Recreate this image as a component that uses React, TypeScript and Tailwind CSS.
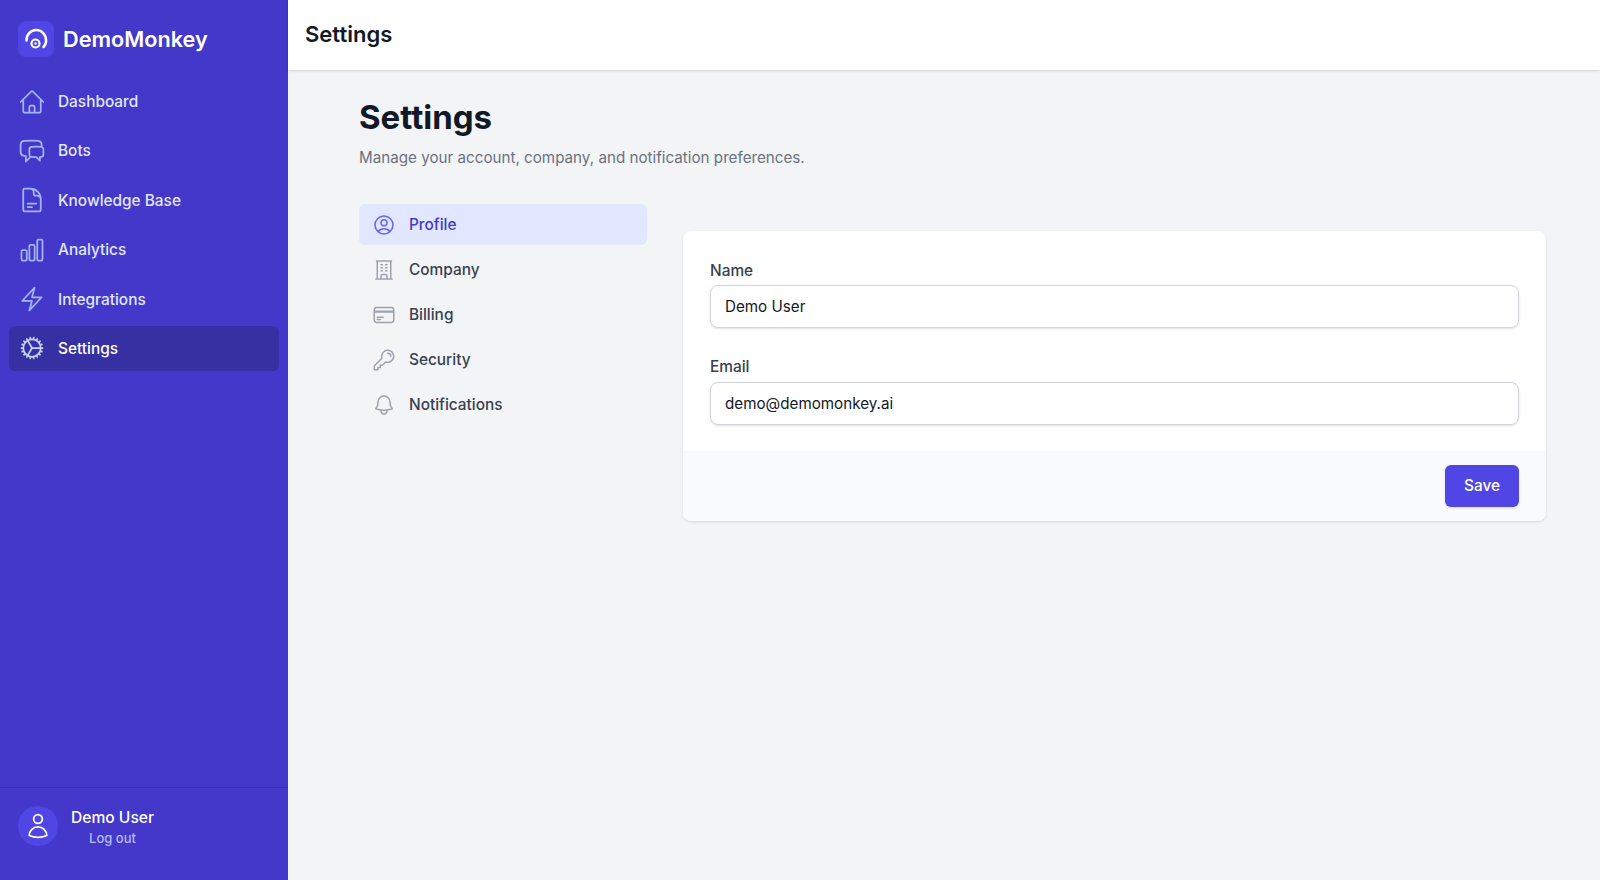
import React from "react";
import {
  HiOutlineHome,
  HiOutlineChatBubbleLeftRight,
  HiOutlineDocumentText,
  HiOutlineChartBar,
  HiOutlineBolt,
  HiOutlineCog,
  HiOutlineUserCircle,
  HiOutlineBuildingOffice,
  HiOutlineCreditCard,
  HiOutlineKey,
  HiOutlineBell,
  HiOutlineUser,
} from "react-icons/hi2";

const nav = [
  { label: "Dashboard", Icon: HiOutlineHome },
  { label: "Bots", Icon: HiOutlineChatBubbleLeftRight },
  { label: "Knowledge Base", Icon: HiOutlineDocumentText },
  { label: "Analytics", Icon: HiOutlineChartBar },
  { label: "Integrations", Icon: HiOutlineBolt },
  { label: "Settings", Icon: HiOutlineCog, active: true },
];
const tabs = [
  { label: "Profile", Icon: HiOutlineUserCircle, active: true },
  { label: "Company", Icon: HiOutlineBuildingOffice },
  { label: "Billing", Icon: HiOutlineCreditCard },
  { label: "Security", Icon: HiOutlineKey },
  { label: "Notifications", Icon: HiOutlineBell },
];

export default function App() {
  return (
    <div className="flex h-[880px] w-[1600px] overflow-hidden bg-[#f3f4f6] font-['Inter',sans-serif]">
      <aside className="flex w-[288px] shrink-0 flex-col bg-[#4338ca]">
        <div className="flex h-[78px] items-center gap-[9px] px-[18px]">
          <div className="flex h-9 w-9 items-center justify-center rounded-lg bg-[#4f46e5]">
            <svg width="36" height="36" viewBox="0 0 36 36" fill="none" stroke="white" strokeWidth="2.5" strokeLinecap="round">
              <path d="M8.5 19.5A9.5 10 0 0 1 28 19C28.5 22 27.5 24 25.5 26" />
              <circle cx="17.5" cy="22.5" r="4" strokeWidth="2.2" />
              <circle cx="17.5" cy="22.5" r="1.2" fill="white" stroke="none" />
            </svg>
          </div>
          <span className="text-[21.7px] font-semibold text-white">DemoMonkey</span>
        </div>
        <nav className="flex-1 px-[9px] pt-[1px]">
          {nav.map(({ label, Icon, active }) => (
            <div key={label} className={`mb-[4.4px] flex h-[45px] items-center gap-[12px] rounded-md px-[9px] text-[15.4px] font-medium ${active ? "bg-[#3730a3] text-white" : "text-[#e0e7ff]"}`}>
              <Icon className={`h-7 w-7 ${active ? "text-[#c7d2fe]" : "text-[#a5b4fc]"}`} />
              {label}
            </div>
          ))}
        </nav>
        <div className="flex h-[93px] items-start gap-[13px] border-t border-[#3730a3] px-[18px] pt-[18px]">
          <div className="flex h-10 w-10 items-center justify-center rounded-full bg-[#4f46e5]">
            <HiOutlineUser className="h-7 w-7 text-white" />
          </div>
          <div className="mt-[2px] text-center">
            <div className="text-[15.6px] font-medium leading-[20px] text-white">Demo User</div>
            <div className="text-[13px] font-medium leading-[20px] text-[#b5bdfb]">Log out</div>
          </div>
        </div>
      </aside>
      <div className="flex min-w-0 flex-1 flex-col">
        <header className="flex h-[70px] items-center bg-white px-[17px] pb-[2px] shadow-sm">
          <h1 className="text-[22px] font-semibold text-[#111827]">Settings</h1>
        </header>
        <main className="pl-[71px] pr-[54px] pt-[27px]">
          <h2 className="text-[33px] font-bold leading-[40px] text-[#111827]">Settings</h2>
          <p className="mt-[9px] text-[15.2px] leading-6 text-[#6b7280]">Manage your account, company, and notification preferences.</p>
          <div className="mt-[34px] flex items-start gap-[36px]">
            <div className="w-[288px] shrink-0">
              {tabs.map(({ label, Icon, active }) => (
                <div key={label} className={`mb-[4px] flex h-[41px] items-center gap-[13px] rounded-md px-[13px] text-[15.4px] font-medium ${active ? "bg-[#e0e7ff] text-[#4338ca]" : "text-[#374151]"}`}>
                  <Icon className={`h-6 w-6 ${active ? "text-[#6366f1]" : "text-[#9ca3af]"}`} />
                  {label}
                </div>
              ))}
            </div>
            <div className="mt-[27px] flex-1 overflow-hidden rounded-lg bg-white shadow">
              <div className="px-[27px] pb-[26px] pt-[28px]">
                <label className="block text-[15.4px] font-medium leading-6 text-[#374151]">Name</label>
                <input readOnly value="Demo User" className="mt-[2px] block h-[43px] w-full rounded-lg border border-[#d1d5db] px-[14px] text-[15.2px] text-[#111827] shadow-sm" />
                <label className="mt-[27px] block text-[15.4px] font-medium leading-6 text-[#374151]">Email</label>
                <input readOnly value="demo@demomonkey.ai" className="mt-[3px] block h-[43px] w-full rounded-lg border border-[#d1d5db] px-[14px] text-[15.2px] text-[#111827] shadow-sm" />
              </div>
              <div className="flex justify-end bg-[#f9fafb] px-[27px] py-[14px]">
                <button className="h-[42px] rounded-md bg-[#4f46e5] px-[19px] text-[15.4px] font-medium text-white shadow-sm">Save</button>
              </div>
            </div>
          </div>
        </main>
      </div>
    </div>
  );
}
